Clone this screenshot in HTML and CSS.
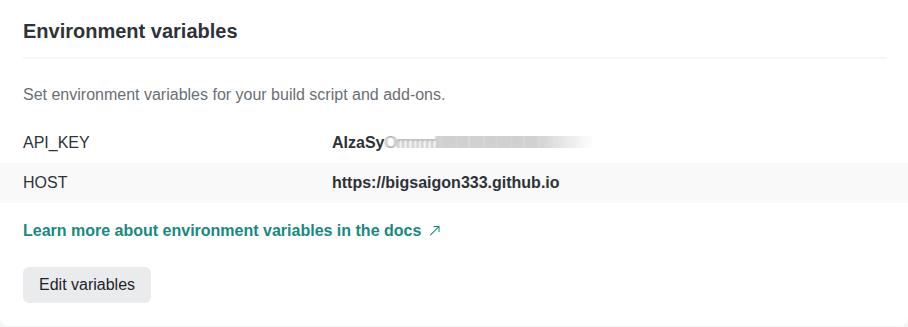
FILE: index.html
```html
<!DOCTYPE html>
<html lang="en">
<head>
  <meta charset="UTF-8" />
  <meta name="viewport" content="width=device-width, initial-scale=1.0"/>
  <title>Environment variables</title>
  <link rel="stylesheet" href="styles.css">
</head>
<body>
  <!-- horizontal smear used to hide the secret value -->
  <svg class="defs" width="0" height="0" aria-hidden="true">
    <filter id="smear" x="-10%" y="-10%" width="120%" height="120%">
      <feGaussianBlur stdDeviation="0.8 0.3" />
    </filter>
  </svg>

  <section class="card">
    <h2 class="card-title">Environment variables</h2>

    <p class="card-desc">Set environment variables for your build script and add-ons.</p>

    <div class="env-list">
      <div class="env-row">
        <span class="env-key">API_KEY</span>
        <span class="env-value">AIzaSy<span class="secret">Orrrrrrrrllllllllllllllllllllllllllllllllllllllllllllllllllll</span></span>
      </div>
      <div class="env-row alt">
        <span class="env-key">HOST</span>
        <span class="env-value">https://bigsaigon333.github.io</span>
      </div>
    </div>

    <a class="docs-link" href="#">Learn more about environment variables in the docs
      <svg class="arrow" width="14" height="14" viewBox="0 0 14 14">
        <path d="M2 12 L12 2 M6 2 H12 V8" fill="none" stroke="currentColor" stroke-width="1.2" stroke-linecap="round" stroke-linejoin="round" transform="scale(0.85) translate(1 2)"/>
      </svg>
    </a>

    <div class="actions">
      <button class="btn">Edit variables</button>
    </div>
  </section>
</body>
</html>
```

FILE: styles.css
```css
body {
  margin: 0;
  font-family: "Liberation Sans", Arial, sans-serif;
  background: #f4f5f5;
  color: #2e3338;
}

.defs {
  position: absolute;
}

.card {
  background: #fff;
  border-radius: 0 0 8px 8px;
  padding: 17px 21px 23px 23px;
  height: 326px;
  box-sizing: border-box;
}

.card-title {
  margin: 0;
  font-size: 20px;
  line-height: 28px;
  font-weight: bold;
  color: #2e3338;
  padding-bottom: 12px;
  border-bottom: 2px solid #f5f5f5;
}

.card-desc {
  margin: 24px 0 16px;
  font-size: 16px;
  line-height: 24px;
  color: #6a6f74;
}

.env-list {
  margin: 0 -21px 16px -23px;
}

.env-row {
  display: grid;
  grid-template-columns: 309px 1fr;
  align-items: center;
  height: 40px;
  padding: 0 21px 0 23px;
  font-size: 16px;
}

.env-row.alt {
  background: #f9f9f9;
}

.env-key {
  color: #2e3338;
}

.env-value {
  font-weight: bold;
  color: #2e3338;
  white-space: nowrap;
}

.secret {
  display: inline-block;
  font-weight: normal;
  color: #9c9ea0;
  letter-spacing: -0.5px;
  filter: url(#smear);
  -webkit-mask-image: linear-gradient(to right, #000 72%, transparent);
  mask-image: linear-gradient(to right, #000 72%, transparent);
}

.docs-link {
  display: inline-block;
  font-size: 16px;
  line-height: 24px;
  font-weight: bold;
  color: #168a80;
  text-decoration: none;
}

.arrow {
  vertical-align: -1px;
  margin-left: 2px;
}

.actions {
  margin-top: 24px;
}

.btn {
  font-family: "Liberation Sans", Arial, sans-serif;
  font-size: 16px;
  height: 36px;
  padding: 0 16px;
  border: none;
  border-radius: 6px;
  background: #e9ebed;
  color: #1f2328;
  cursor: pointer;
}
```
